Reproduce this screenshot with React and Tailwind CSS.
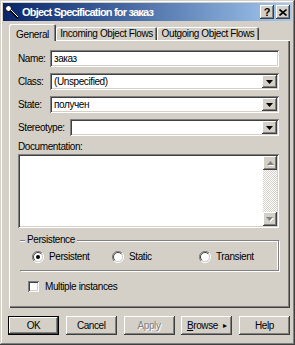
import React from "react";

const raised =
  "shadow-[inset_-1px_-1px_#404040,inset_1px_1px_#ffffff,inset_-2px_-2px_#808080,inset_2px_2px_#d4d0c8]";
const sunken =
  "shadow-[inset_1px_1px_#808080,inset_-1px_-1px_#ffffff,inset_2px_2px_#404040,inset_-2px_-2px_#d4d0c8]";

function DropBtn() {
  return (
    <div className={`w-[15px] h-[13px] bg-[#d4d0c8] flex items-center justify-center ${raised}`}>
      <svg width="7" height="4" viewBox="0 0 7 4">
        <path d="M0 0h7L3.5 4z" fill="#000" />
      </svg>
    </div>
  );
}

function Field({ label, value, labelW = "w-[32px]", drop }) {
  return (
    <div className="flex items-center h-[17px]">
      <div className={`${labelW} shrink-0`}>{label}</div>
      <div className={`flex-1 h-[17px] bg-white flex items-center pl-[4px] pr-[2px] ${sunken}`}>
        <span className="flex-1 truncate">{value}</span>
        {drop && <DropBtn />}
      </div>
    </div>
  );
}

function Radio({ checked, label, className = "" }) {
  return (
    <div className={`flex items-center ${className}`}>
      <svg width="12" height="12" viewBox="0 0 12 12" className="mr-[5px]">
        <path d="M10 2A5.5 5.5 0 0 0 2 10" stroke="#808080" strokeWidth="1" fill="none" />
        <path d="M2 10A5.5 5.5 0 0 0 10 2" stroke="#ffffff" strokeWidth="1" fill="none" />
        <circle cx="6" cy="6" r="4.5" fill="#ffffff" />
        <path d="M9.2 2.8A4.5 4.5 0 0 0 2.8 9.2" stroke="#404040" strokeWidth="1" fill="none" />
        <path d="M2.8 9.2A4.5 4.5 0 0 0 9.2 2.8" stroke="#d4d0c8" strokeWidth="1" fill="none" />
        {checked && <circle cx="6" cy="6" r="2" fill="#000" />}
      </svg>
      <span>{label}</span>
    </div>
  );
}

function Btn({ children, def, disabled }) {
  return (
    <div
      className={`w-[51px] h-[19px] bg-[#d4d0c8] flex items-center justify-center ${
        def ? "border border-black" : ""
      } ${raised} ${disabled ? "text-[#808080] [text-shadow:1px_1px_#ffffff]" : "text-black"}`}
    >
      {children}
    </div>
  );
}

export default function App() {
  return (
    <div
      className="w-[295px] h-[345px] bg-[#d4d0c8] p-[3px] text-[10px] tracking-[-0.4px] text-black shadow-[inset_-1px_-1px_#404040,inset_1px_1px_#d4d0c8,inset_-2px_-2px_#808080,inset_2px_2px_#ffffff] flex flex-col"
      style={{ fontFamily: '"Liberation Sans", Arial, sans-serif' }}
    >
      {/* title bar */}
      <div className="h-[18px] bg-linear-to-r from-[#0a246a] to-[#a6caf0] flex items-center pl-[1px] pr-[2px]">
        <svg width="16" height="16" viewBox="0 0 16 16" className="mr-[2px]">
          <circle cx="4.5" cy="4.5" r="3" fill="#fff" stroke="#000" strokeWidth="1" />
          <path d="M6.5 6.5L14 14" stroke="#000" strokeWidth="2" />
          <path d="M7 6L14 13" stroke="#fff" strokeWidth="1" />
        </svg>
        <span className="flex-1 text-white font-bold text-[11px] tracking-[-0.8px]">
          Object Specification for заказ
        </span>
        <div className="flex gap-[2px]">
          <div className={`w-[14px] h-[14px] bg-[#d4d0c8] flex items-center justify-center font-bold text-[11px] tracking-normal ${raised}`}>
            ?
          </div>
          <div className={`w-[14px] h-[14px] bg-[#d4d0c8] flex items-center justify-center ${raised}`}>
            <svg width="8" height="7" viewBox="0 0 8 7">
              <path d="M0.5 0.5L7.5 6.5M7.5 0.5L0.5 6.5" stroke="#000" strokeWidth="1.6" />
            </svg>
          </div>
        </div>
      </div>

      {/* tabs */}
      <div className="ml-[6px] mt-[3px] flex items-end h-[16px] relative z-10">
        <div className="w-[47px] h-[17px] -mb-[1px] bg-[#d4d0c8] rounded-t-[2px] shadow-[inset_1px_1px_#ffffff,inset_-1px_0_#404040,inset_-2px_0_#808080] flex items-start pt-[3px] justify-center">
          General
        </div>
        <div className="w-[101px] h-[13px] bg-[#d4d0c8] rounded-t-[2px] shadow-[inset_1px_1px_#ffffff,inset_-1px_0_#404040,inset_-2px_0_#808080] flex items-center justify-center">
          Incoming Object Flows
        </div>
        <div className="w-[102px] h-[13px] bg-[#d4d0c8] rounded-t-[2px] shadow-[inset_1px_1px_#ffffff,inset_-1px_0_#404040,inset_-2px_0_#808080] flex items-center justify-center">
          Outgoing Object Flows
        </div>
      </div>

      {/* panel */}
      <div className="ml-[6px] w-[281px] h-[268px] shadow-[inset_1px_1px_#ffffff,inset_-1px_-1px_#404040,inset_-2px_-2px_#808080] pt-[10px] pl-[9px] pr-[11px] flex flex-col">
        <div className="flex flex-col gap-[6px]">
          <Field label="Name:" value="заказ" />
          <Field label="Class:" value="(Unspecified)" drop />
          <Field label="State:" value="получен" drop />
          <Field label="Stereotype:" value="" labelW="w-[52px]" drop />
        </div>
        <div className="mt-[5px] h-[12px] leading-[12px]">Documentation:</div>
        <div className={`mt-[1px] h-[74px] bg-white flex justify-end p-[2px] ${sunken}`}>
          <div className="w-[14px] flex flex-col">
            <div className={`h-[14px] bg-[#d4d0c8] flex items-center justify-center ${raised}`}>
              <svg width="7" height="5" viewBox="0 0 7 5">
                <path d="M4 1L7.5 5H1.5z" fill="#ffffff" />
                <path d="M3.5 0L7 4H0z" fill="#808080" />
              </svg>
            </div>
            <div className="flex-1 bg-[repeating-conic-gradient(#d4d0c8_0_25%,#ffffff_0_50%)] bg-[length:2px_2px]" />
            <div className={`h-[14px] bg-[#d4d0c8] flex items-center justify-center ${raised}`}>
              <svg width="8" height="5" viewBox="0 0 8 5">
                <path d="M1 1h7L4.5 5z" fill="#ffffff" />
                <path d="M0 0h7L3.5 4z" fill="#808080" />
              </svg>
            </div>
          </div>
        </div>

        {/* group box */}
        <div className="mt-[12px] ml-[2px] h-[31px] relative border-t border-r border-b border-[#808080] shadow-[1px_1px_#ffffff,inset_0_1px_#ffffff,inset_-1px_0_#ffffff]">
          <div className="absolute -top-[7px] left-[5px] bg-[#d4d0c8] px-[2px] leading-[12px]">
            Persistence
          </div>
          <div className="flex items-center h-full pt-[2px] pl-[12px]">
            <Radio checked label="Persistent" className="w-[80px]" />
            <Radio label="Static" className="w-[87px]" />
            <Radio label="Transient" />
          </div>
        </div>

        <div className="mt-[8px] ml-[10px] flex items-center h-[14px]">
          <div className={`w-[11px] h-[11px] bg-white mr-[6px] ${sunken}`} />
          <span>Multiple instances</span>
        </div>
      </div>

      {/* buttons */}
      <div className="mt-[8px] ml-[5px] w-[282px] flex justify-between">
        <Btn def>OK</Btn>
        <Btn>Cancel</Btn>
        <Btn disabled>Apply</Btn>
        <Btn>
          <span>
            <span className="underline">B</span>rowse
          </span>
          <span className="ml-[5px] text-[8px]">▸</span>
        </Btn>
        <Btn>Help</Btn>
      </div>
    </div>
  );
}
